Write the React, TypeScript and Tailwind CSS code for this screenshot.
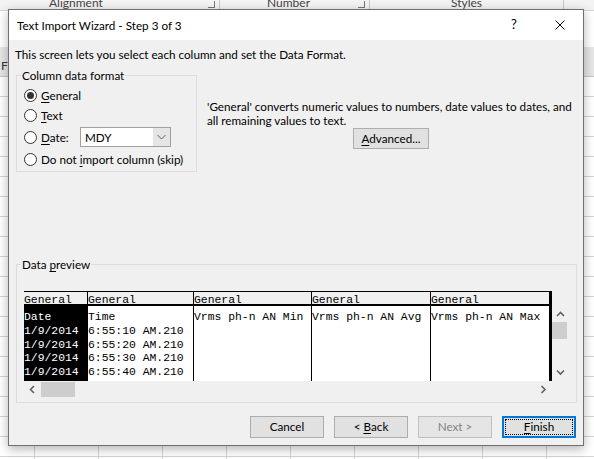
import React from 'react';

const ui = "font-['Lato',sans-serif]";
const mono = "font-['Liberation_Mono',monospace]";

function Chevron({ dir }: { dir: 'up' | 'down' | 'left' | 'right' }) {
  const d = {
    up: 'M1 5 L4.5 1.5 L8 5',
    down: 'M1 1.5 L4.5 5 L8 1.5',
    left: 'M5 1 L1.5 4.5 L5 8',
    right: 'M1.5 1 L5 4.5 L1.5 8',
  }[dir];
  const vertical = dir === 'up' || dir === 'down';
  return (
    <svg width={vertical ? 9 : 7} height={vertical ? 7 : 9} viewBox={vertical ? '0 0 9 7' : '0 0 7 9'}>
      <path d={d} fill="none" stroke="#606060" strokeWidth="1.6" />
    </svg>
  );
}

function Radio({ checked }: { checked?: boolean }) {
  return (
    <span className="w-[13px] h-[13px] rounded-full border border-[#333333] bg-white flex items-center justify-center shrink-0">
      {checked && <span className="w-[7px] h-[7px] rounded-full bg-[#333333]" />}
    </span>
  );
}

function U({ children }: { children: React.ReactNode }) {
  return <span className="underline underline-offset-[2px] decoration-[1px]">{children}</span>;
}

function Button({ children, className = '' }: { children: React.ReactNode; className?: string }) {
  return (
    <div className={`h-[22px] w-[74px] flex items-center justify-center bg-[#e1e1e1] border border-[#adadad] ${className}`}>
      {children}
    </div>
  );
}

const columns = [
  { w: 'w-[64px]', border: true, selected: true, rows: ['Date', '1/9/2014', '1/9/2014', '1/9/2014', '1/9/2014'] },
  { w: 'w-[106px]', border: true, rows: ['Time', '6:55:10 AM.210', '6:55:20 AM.210', '6:55:30 AM.210', '6:55:40 AM.210'] },
  { w: 'w-[118px]', border: true, rows: ['Vrms ph-n AN Min'] },
  { w: 'w-[119px]', border: true, rows: ['Vrms ph-n AN Avg'] },
  { w: 'w-[118px]', border: false, rows: ['Vrms ph-n AN Max'] },
];

function ExcelBackdrop() {
  return (
    <div className="absolute inset-0">
      {/* ribbon group labels, mostly hidden behind the dialog */}
      <div className="h-[11px] bg-[#f3f3f3] border-b border-[#d6d6d6] flex text-[12px] text-[#444444] overflow-hidden">
        <div className="w-[220px] shrink-0 flex items-start border-r border-[#c8c8c8]">
          <span className="ml-[49px] -mt-[5px] leading-[16px]">Alignment</span>
          <span className="ml-auto mr-[4px] mt-[1px] w-[7px] h-[7px] border-r border-b border-[#777777]" />
        </div>
        <div className="w-[150px] shrink-0 flex items-start border-r border-[#c8c8c8]">
          <span className="ml-[47px] -mt-[5px] leading-[16px]">Number</span>
          <span className="ml-auto mr-[4px] mt-[1px] w-[7px] h-[7px] border-r border-b border-[#777777]" />
        </div>
        <div className="w-[194px] shrink-0 flex justify-center border-r border-[#c8c8c8]">
          <span className="-mt-[5px] leading-[16px]">Styles</span>
        </div>
      </div>
      <div className="h-[36px]" />
      <div className="h-[30px] bg-[#e6e6e6] border-b border-[#c6c6c6] flex items-end">
        <span className="ml-[1px] mb-[2px] text-[12px] leading-[16px] text-[#333333]">F</span>
      </div>
      <div className="h-[382px] bg-white bg-[linear-gradient(to_right,#d4d4d4_1px,transparent_1px),linear-gradient(#d4d4d4_1px,transparent_1px)] bg-[size:64px_20px] bg-[position:34px_19px]" />
    </div>
  );
}

export default function App() {
  return (
    <div className={`relative w-[594px] h-[459px] overflow-hidden bg-white text-[11.7px] text-black ${ui}`}>
      <ExcelBackdrop />
      <div className="relative pl-[8px] pt-[9px]">
        <div className="w-[576px] h-[437px] border border-[#707070] bg-[#f0f0f0] shadow-[0_3px_10px_rgba(0,0,0,0.3)] flex flex-col">
          {/* title bar */}
          <div className="h-[30px] bg-white flex items-center shrink-0">
            <span className="pl-[8px] leading-[16px]">Text Import Wizard - Step 3 of 3</span>
            <div className="ml-auto flex h-full">
              <div className="w-[46px] flex items-center justify-center text-[13px]">?</div>
              <div className="w-[46px] flex items-center justify-center">
                <svg width="10" height="10" viewBox="0 0 10 10">
                  <path d="M0.5 0.5 L9.5 9.5 M9.5 0.5 L0.5 9.5" stroke="#000" strokeWidth="1" />
                </svg>
              </div>
            </div>
          </div>

          {/* body */}
          <div className="flex flex-col pt-[6px]">
            <div className="ml-[6px] leading-[16px]">This screen lets you select each column and set the Data Format.</div>

            <div className="flex mt-[5px]">
              <fieldset className="ml-[7px] w-[181px] border border-[#dcdcdc] pl-[7px] pb-[4px]">
                <legend className="-ml-[3px] px-[1px] leading-[16px]">Column data format</legend>
                <div className="flex flex-col gap-[4px] pt-[4px]">
                  <div className="h-[16px] flex items-center gap-[4px]">
                    <Radio checked />
                    <span className="leading-[16px]"><U>G</U>eneral</span>
                  </div>
                  <div className="h-[16px] flex items-center gap-[4px]">
                    <Radio />
                    <span className="leading-[16px]"><U>T</U>ext</span>
                  </div>
                  <div className="h-[20px] flex items-center">
                    <Radio />
                    <span className="ml-[4px] w-[39px] leading-[16px]"><U>D</U>ate:</span>
                    <div className="w-[91px] h-[20px] border border-[#a0a0a0] bg-white flex">
                      <span className="pl-[4px] flex-1 flex items-center leading-[16px]">MDY</span>
                      <span className="w-[17px] bg-[#e5e5e5] flex items-center justify-center">
                        <svg width="9" height="6" viewBox="0 0 9 6">
                          <path d="M0.5 1 L4.5 5 L8.5 1" fill="none" stroke="#606060" strokeWidth="1" />
                        </svg>
                      </span>
                    </div>
                  </div>
                  <div className="h-[16px] flex items-center gap-[4px]">
                    <Radio />
                    <span className="leading-[16px] whitespace-nowrap">Do not <U>i</U>mport column (skip)</span>
                  </div>
                </div>
              </fieldset>

              <div className="ml-[10px] w-[368px] pt-[32px] flex flex-col items-center">
                <div className="self-start leading-[14px] whitespace-nowrap">
                  'General' converts numeric values to numbers, date values to dates, and
                  <br />
                  all remaining values to text.
                </div>
                <div className="mt-[1px] w-[76px] h-[21px] bg-[#e1e1e1] border border-[#adadad] flex items-center justify-center">
                  <span><U>A</U>dvanced...</span>
                </div>
              </div>
            </div>

            {/* data preview */}
            <fieldset className="ml-[7px] mt-[84px] w-[561px] border border-[#dcdcdc] pl-[7px] pb-[5px]">
              <legend className="-ml-[3px] px-[1px] leading-[16px]">Data <U>p</U>review</legend>
              <div className="mt-[19px] flex flex-col">
                <div className="flex">
                  <div className={`w-[528px] flex border-r-[3px] border-black text-[11.4px] ${mono}`}>
                    {columns.map((c, i) => (
                      <div key={i} className={`${c.w} shrink-0 flex flex-col ${c.border ? 'border-r border-black' : ''}`}>
                        <div className="h-[15px] border-t border-b-2 border-black bg-[#f0f0f0] flex items-end">
                          <span className="leading-[8px]">General</span>
                        </div>
                        <div className={`h-[75px] pt-[5px] leading-[13.75px] whitespace-pre overflow-hidden ${c.selected ? 'bg-black text-white' : 'bg-white'}`}>
                          {c.rows.map((r, j) => (
                            <div key={j}>{r}</div>
                          ))}
                        </div>
                      </div>
                    ))}
                  </div>
                  <div className="w-[16px] flex flex-col">
                    <div className="h-[15px]" />
                    <div className="h-[16px] flex items-center justify-center">
                      <Chevron dir="up" />
                    </div>
                    <div className="h-[17px] w-[15px] bg-[#cdcdcd]" />
                    <div className="flex-1" />
                    <div className="h-[17px] flex items-center justify-center">
                      <Chevron dir="down" />
                    </div>
                  </div>
                </div>
                <div className="h-[16px] w-[528px] flex">
                  <div className="w-[17px] flex items-center justify-center">
                    <Chevron dir="left" />
                  </div>
                  <div className="mt-[1px] h-[15px] w-[34px] bg-[#cdcdcd]" />
                  <div className="flex-1" />
                  <div className="w-[17px] flex items-center justify-center">
                    <Chevron dir="right" />
                  </div>
                </div>
              </div>
            </fieldset>

            {/* footer buttons */}
            <div className="mt-[13px] pr-[7px] flex justify-end gap-[10px]">
              <Button>Cancel</Button>
              <Button>&lt;&nbsp;<U>B</U>ack</Button>
              <Button className="bg-[#e5e5e5] border-[#bfbfbf] text-[#838383]">Next &gt;</Button>
              <div className="h-[22px] w-[74px] bg-[#e1e1e1] border-2 border-[#0078d7] p-[1px] flex">
                <span className="flex-1 border border-dotted border-black flex items-center justify-center">
                  <U>F</U>inish
                </span>
              </div>
            </div>
          </div>
        </div>
      </div>
    </div>
  );
}
